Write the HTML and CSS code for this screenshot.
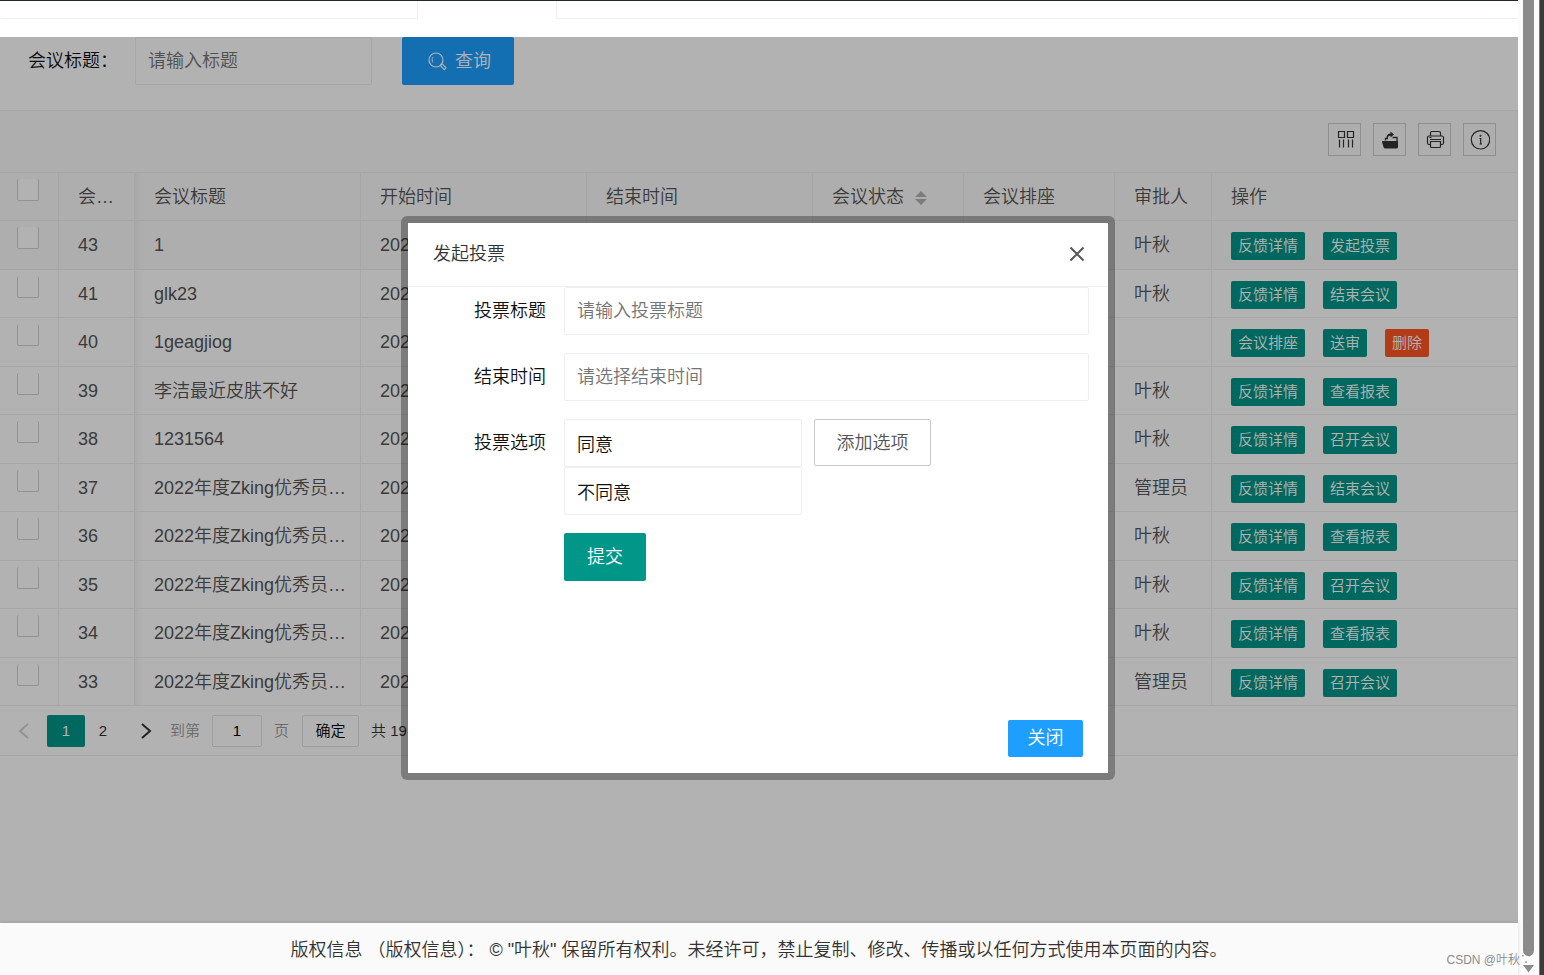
FILE: index.html
```html
<!DOCTYPE html>
<html lang="zh-CN">
<head>
<meta charset="utf-8">
<title>发起投票</title>
<link rel="stylesheet" href="styles.css">
</head>
<body>
<div class="shell">
  <div class="page">
    <div class="tabs"><div class="tab tab-first"></div><div class="tab tab-rest"></div></div>

    <main class="content">
      <form class="search">
        <label class="search-label" for="q">会议标题：</label>
        <input class="field search-field" id="q" type="text" placeholder="请输入标题">
        <button class="btn btn-blue" type="button">
          <svg width="19" height="19" viewBox="0 0 19 19" fill="none" stroke="currentColor"><circle cx="8" cy="8" r="7" stroke-width="1.2"/><path d="M5 5.2C3.800 6.600 3.800 9 5 10.600" stroke-width="1"/><path d="M13 12.400l1.400-.4 3.600 3.800-1.800 1.800-3.600-3.800z" stroke-width="1.100"/></svg>
          查询
        </button>
      </form>

      <section class="grid">
        <div class="toolbar">
          <button class="tool" type="button" aria-label="筛选列"><svg width="20" height="20" viewBox="0 0 20 20" fill="none" stroke="currentColor" stroke-width="1.200"><path d="M3.500 1.500h6v6h-6zM12.500 1.500h6v6h-6zM4.500 9.500v8M8.500 9.500v8M13.500 9.500v8M17.500 9.500v8"/></svg></button>
          <button class="tool" type="button" aria-label="导出"><svg width="20" height="20" viewBox="0 0 20 20" fill="currentColor"><path d="M2.500 11H18v6q0 1.500-1.500 1.500H5q-1 0-1.300-1L2 12z"/><path d="M5.500 10.500V8.500h2.500M12.500 7.500h4.500v4" fill="none" stroke="currentColor" stroke-width="1.300"/><path d="M6.500 8C6.500 5 8 3.500 10.500 3.500V1.500L14 4.500l-3.500 3V5.800C8.800 5.800 8 6.500 7.800 8z"/></svg></button>
          <button class="tool" type="button" aria-label="打印"><svg width="20" height="20" viewBox="0 0 20 20" fill="none" stroke="currentColor" stroke-width="1.200"><path d="M5.500 6V3q0-1.500 1.500-1.500h7q1.500 0 1.500 1.500v3M5.500 14.500H4q-1.500 0-1.500-1.500V7.500Q2.500 6 4 6h13q1.500 0 1.500 1.500V13q0 1.500-1.500 1.500h-1.500"/><path d="M5.500 11.500h10v5q0 1-1 1h-8q-1 0-1-1z"/><path d="M4.500 7.500h2M5 9.500h11" stroke-width="1"/></svg></button>
          <button class="tool" type="button" aria-label="提示"><svg width="20" height="20" viewBox="0 0 20 20" fill="none" stroke="currentColor" stroke-width="1.200"><circle cx="10.500" cy="9.800" r="9.200"/><path d="M9.500 8.500h1.200V14M9.500 14h2.500"/><circle cx="10.500" cy="5.800" r=".4" fill="currentColor"/></svg></button>
        </div>

        <table class="table">
          <colgroup><col class="c-check"><col class="c-id"><col class="c-wide"><col class="c-wide"><col class="c-wide"><col class="c-mid"><col class="c-mid"><col class="c-user"><col></colgroup>
          <thead>
            <tr><th class="pick"><input class="check" type="checkbox" aria-label="全选"></th><th>会…</th><th>会议标题</th><th>开始时间</th><th>结束时间</th><th>会议状态<svg class="sort" width="12" height="16" viewBox="0 0 12 16"><path d="M0 7L6 1l6 6zM0 9h12l-6 6z" fill="currentColor"/></svg></th><th>会议排座</th><th>审批人</th><th>操作</th></tr>
          </thead>
          <tbody>
            <tr class="hover"><td class="pick"><input class="check" type="checkbox" aria-label="43"></td><td>43</td><td>1</td><td>2022</td><td></td><td></td><td></td><td>叶秋</td><td><div class="ops"><button class="op" type="button">反馈详情</button><button class="op" type="button">发起投票</button></div></td></tr>
            <tr><td class="pick"><input class="check" type="checkbox" aria-label="41"></td><td>41</td><td>glk23</td><td>2022</td><td></td><td></td><td></td><td>叶秋</td><td><div class="ops"><button class="op" type="button">反馈详情</button><button class="op" type="button">结束会议</button></div></td></tr>
            <tr><td class="pick"><input class="check" type="checkbox" aria-label="40"></td><td>40</td><td>1geagjiog</td><td>2022</td><td></td><td></td><td></td><td></td><td><div class="ops"><button class="op" type="button">会议排座</button><button class="op" type="button">送审</button><button class="op op-red" type="button">删除</button></div></td></tr>
            <tr><td class="pick"><input class="check" type="checkbox" aria-label="39"></td><td>39</td><td>李洁最近皮肤不好</td><td>2022</td><td></td><td></td><td></td><td>叶秋</td><td><div class="ops"><button class="op" type="button">反馈详情</button><button class="op" type="button">查看报表</button></div></td></tr>
            <tr><td class="pick"><input class="check" type="checkbox" aria-label="38"></td><td>38</td><td>1231564</td><td>2022</td><td></td><td></td><td></td><td>叶秋</td><td><div class="ops"><button class="op" type="button">反馈详情</button><button class="op" type="button">召开会议</button></div></td></tr>
            <tr><td class="pick"><input class="check" type="checkbox" aria-label="37"></td><td>37</td><td>2022年度Zking优秀员…</td><td>2022</td><td></td><td></td><td></td><td>管理员</td><td><div class="ops"><button class="op" type="button">反馈详情</button><button class="op" type="button">结束会议</button></div></td></tr>
            <tr><td class="pick"><input class="check" type="checkbox" aria-label="36"></td><td>36</td><td>2022年度Zking优秀员…</td><td>2022</td><td></td><td></td><td></td><td>叶秋</td><td><div class="ops"><button class="op" type="button">反馈详情</button><button class="op" type="button">查看报表</button></div></td></tr>
            <tr><td class="pick"><input class="check" type="checkbox" aria-label="35"></td><td>35</td><td>2022年度Zking优秀员…</td><td>2022</td><td></td><td></td><td></td><td>叶秋</td><td><div class="ops"><button class="op" type="button">反馈详情</button><button class="op" type="button">召开会议</button></div></td></tr>
            <tr><td class="pick"><input class="check" type="checkbox" aria-label="34"></td><td>34</td><td>2022年度Zking优秀员…</td><td>2022</td><td></td><td></td><td></td><td>叶秋</td><td><div class="ops"><button class="op" type="button">反馈详情</button><button class="op" type="button">查看报表</button></div></td></tr>
            <tr><td class="pick"><input class="check" type="checkbox" aria-label="33"></td><td>33</td><td>2022年度Zking优秀员…</td><td>2022</td><td></td><td></td><td></td><td>管理员</td><td><div class="ops"><button class="op" type="button">反馈详情</button><button class="op" type="button">召开会议</button></div></td></tr>
          </tbody>
        </table>

        <nav class="pager">
          <button class="page-btn page-off" type="button" aria-label="上一页"><svg width="12" height="16" viewBox="0 0 12 16" fill="none" stroke="currentColor" stroke-width="2"><path d="M10 1L2 8l8 7"/></svg></button>
          <button class="page-btn page-on" type="button">1</button>
          <button class="page-btn" type="button">2</button>
          <button class="page-btn page-next" type="button" aria-label="下一页"><svg width="12" height="16" viewBox="0 0 12 16" fill="none" stroke="currentColor" stroke-width="2"><path d="M2 1l8 7-8 7"/></svg></button>
          <label class="page-hint" for="jump">到第</label>
          <input class="jump" id="jump" type="text" value="1">
          <span class="page-hint">页</span>
          <button class="jump jump-go" type="button">确定</button>
          <span class="total">共 19 条</span>
        </nav>
      </section>

      <div class="shade">
        <div class="dialog" role="dialog" aria-labelledby="dlg-title">
          <header class="dialog-head">
            <h1 class="dialog-title" id="dlg-title">发起投票</h1>
            <button class="close" type="button" aria-label="关闭窗口"><svg width="16" height="16" viewBox="0 0 16 16" fill="none" stroke="currentColor" stroke-width="2"><path d="M1.500 1.500l13 13M14.500 1.500l-13 13"/></svg></button>
          </header>
          <form class="form">
            <div class="row"><label class="row-label" for="t">投票标题</label><input class="field grow" id="t" type="text" placeholder="请输入投票标题"></div>
            <div class="row"><label class="row-label" for="e">结束时间</label><input class="field grow" id="e" type="text" placeholder="请选择结束时间"></div>
            <div class="row">
              <label class="row-label" for="o1">投票选项</label>
              <div class="options"><input class="field" id="o1" type="text" value="同意"><input class="field" type="text" aria-label="选项二" value="不同意"></div>
              <button class="btn btn-plain" type="button">添加选项</button>
            </div>
            <div class="row row-submit"><button class="btn btn-teal" type="button">提交</button></div>
          </form>
          <footer class="dialog-foot"><button class="btn btn-close" type="button">关闭</button></footer>
        </div>
      </div>
    </main>

    <footer class="copyright">版权信息 （版权信息）： © "叶秋" 保留所有权利。未经许可，禁止复制、修改、传播或以任何方式使用本页面的内容。</footer>
  </div>
  <aside class="rail">
    <div class="thumb"></div>
    <svg width="11" height="9" viewBox="0 0 11 9"><path d="M0 1h11L5.500 8.500z" fill="#8b8b8b"/></svg>
  </aside>
  <div class="edge"></div>
  <div class="mark">CSDN @叶秋∵</div>
</div>
</body>
</html>
```

FILE: styles.css
```css
* { box-sizing: border-box; }

body {
  margin: 0;
  background: #fff;
  color: #111;
  font: 350 18px/24px "Liberation Sans", "Noto Sans CJK SC", sans-serif;
}

button, input { font: inherit; color: inherit; }
button { cursor: pointer; white-space: nowrap; padding: 0; }

.shell { position: relative; display: flex; height: 100vh; overflow: hidden; }
.page { flex: 1; min-width: 0; display: flex; flex-direction: column; border-top: 1px solid #23262e; }

.tabs { display: flex; justify-content: space-between; gap: 138px; height: 36px; flex: none; }
.tab { height: 18px; border: 1px solid #eee; border-top: 0; border-radius: 0 0 2px 2px; }
.tab-first { width: 418px; border-left: 0; }
.tab-rest { flex: 1; border-right: 0; }

.content { position: relative; flex: 1; min-height: 0; }

.search { display: flex; align-items: flex-start; padding-bottom: 25px; }
.search-label { width: 135px; padding: 12px 0 0 28px; white-space: nowrap; }
.field {
  height: 48px;
  min-width: 0;
  padding: 0 12px;
  border: 1px solid #eee;
  border-radius: 2px;
  background: #fff;
  outline: 0;
}
.field::placeholder { color: #757575; opacity: 1; }
.search-field { width: 237px; margin-right: 30px; }

.btn {
  display: flex;
  align-items: center;
  justify-content: center;
  gap: 8px;
  height: 48px;
  padding: 0 23px;
  border: 0;
  border-radius: 2px;
  color: #fff;
}
.btn-blue { width: 112px; padding: 0 21px 0 24px; background: #1e9fff; }
.btn-teal { background: #009688; }
.btn-plain { width: 117px; height: 47px; margin-left: 12px; border: 1px solid #c9c9c9; background: #fff; color: #555; }
.btn-close { width: 75px; height: 37px; padding-bottom: 2px; background: #1e9fff; }

.grid { border: 1px solid #eee; border-left: 0; }
.toolbar { display: flex; justify-content: flex-end; gap: 12px; height: 61px; padding: 12px 21px 0 0; background: #fafafa; }
.tool {
  display: grid;
  place-items: center;
  width: 33px;
  height: 33px;
  border: 1px solid #ccc;
  background: none;
  color: #333;
}

.table { width: 100%; border-collapse: separate; border-spacing: 0; table-layout: fixed; color: #555; border-top: 1px solid #eee; }
.c-check { width: 59px; }
.c-id { width: 76px; }
.c-wide { width: 226px; }
.c-mid { width: 151px; }
.c-user { width: 97px; }
.table tr { height: 49px; }
.table thead tr, .table tbody tr:nth-child(even) { height: 48px; }
.table th, .table td {
  padding: 0 8px 0 19px;
  border-right: 1px solid #eee;
  border-bottom: 1px solid #eee;
  text-align: left;
  font-weight: 350;
  overflow: hidden;
  white-space: nowrap;
}
.table th:last-child, .table td:last-child { border-right: 0; }
.table th:nth-child(3), .table td:nth-child(3) { background: linear-gradient(to right, rgba(0, 0, 0, .04), transparent 8px); }
.table thead tr, .hover { background: #fafafa; }
.table .pick { padding: 6px 0 0 17px; vertical-align: top; line-height: 1; }
.check {
  display: block;
  appearance: none;
  width: 22px;
  height: 22px;
  margin: 0;
  border: 1px solid #d2d2d2;
  border-top: 0;
  border-radius: 2px;
  background: #fff;
}
.sort { margin-left: 11px; vertical-align: -3px; color: #b2b2b2; }

.ops { display: flex; gap: 18px; padding-top: 2px; }
.op { height: 28px; padding: 0 7px; border: 0; border-radius: 2px; background: #009688; color: #fff; font-size: 15px; line-height: 28px; }
.op-red { background: #ff5722; }

.pager { display: flex; align-items: center; height: 49px; font-size: 15px; color: #333; }
.page-btn { display: grid; place-items: center; width: 36px; height: 32px; border: 0; border-radius: 2px; background: none; }
.page-off { width: 47px; color: #d2d2d2; }
.page-on { width: 38px; background: #009688; color: #fff; }
.page-next { width: 49px; }
.page-hint { color: #999; }
.jump { width: 50px; height: 32px; margin: 0 12px; padding: 0; border: 1px solid #e2e2e2; border-radius: 2px; background: #fff; text-align: center; color: #000; }
.jump-go { width: 57px; margin-left: 13px; }

.shade {
  position: absolute;
  inset: 0;
  display: flex;
  justify-content: center;
  align-items: flex-start;
  padding-top: 179px;
  background: rgba(0, 0, 0, .3);
}
.dialog {
  display: flex;
  flex-direction: column;
  width: 714px;
  max-width: 100%;
  min-height: 564px;
  margin-right: 2px;
  border: 7px solid rgba(0, 0, 0, .3);
  border-radius: 6px;
  background: #fff;
  background-clip: padding-box;
}
.dialog-head { display: flex; justify-content: space-between; align-items: center; height: 64px; padding: 0 23px 2px 25px; border-bottom: 1px solid #eee; }
.dialog-title { margin: 0; font-size: 18px; font-weight: 350; color: #333; }
.close { display: flex; border: 0; background: none; color: #555; }
.form { flex: 1; display: flex; flex-direction: column; gap: 18px; padding-right: 19px; }
.row { display: flex; align-items: flex-start; }
.row-label { flex: none; width: 156px; padding: 12px 18px 0 0; text-align: right; }
.grow { flex: 1; }
.options { display: flex; flex-direction: column; width: 238px; }
.row-submit { padding-left: 156px; }
.dialog-foot { display: flex; justify-content: flex-end; padding: 0 25px 16px; }

.copyright {
  position: relative;
  flex: none;
  height: 52px;
  padding-top: 15px;
  background: #fafafa;
  box-shadow: 0 0 4px rgba(0, 0, 0, .15);
  color: #333;
  text-align: center;
  white-space: nowrap;
}

.rail { display: flex; flex-direction: column; align-items: center; gap: 8px; width: 21px; padding-bottom: 2px; background: #fcfcfc; }
.thumb { flex: 1; width: 11px; border-radius: 0 0 6px 6px; background: #8b8b8b; }
.edge { width: 5px; border-left: 1px solid #777; background: #3a3a3a; }
.mark { position: absolute; right: 12px; bottom: 5px; color: #8c8c8c; font-size: 12px; line-height: 20px; }
```
